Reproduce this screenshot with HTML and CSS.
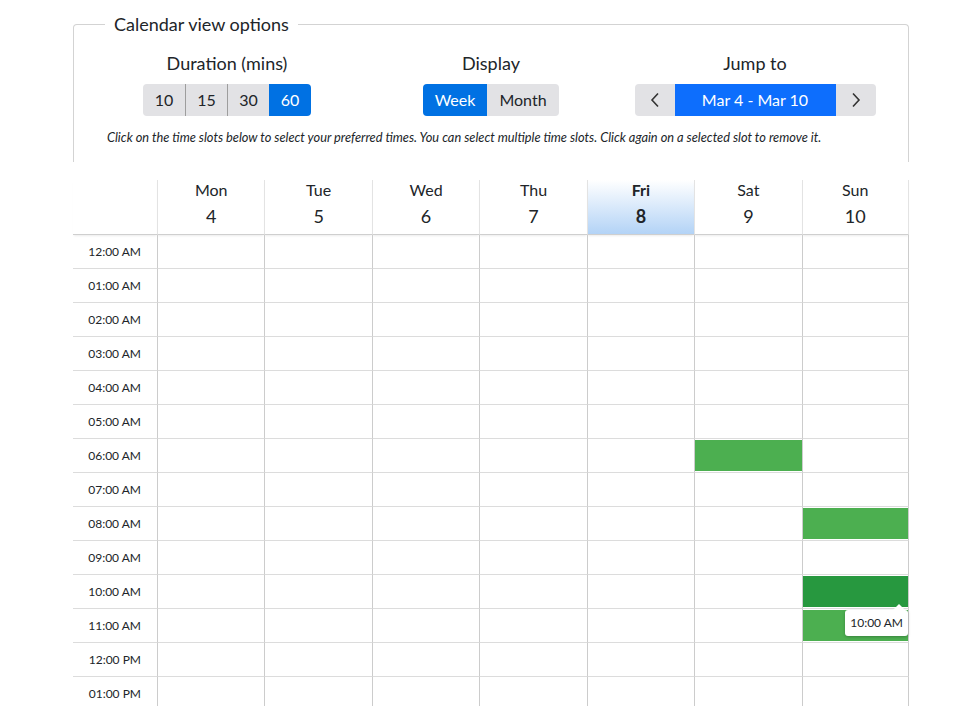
FILE: index.html
```html
<!DOCTYPE html>
<html lang="en">
<head>
<meta charset="utf-8">
<title>Calendar</title>
<link rel="stylesheet" href="styles.css">
</head>
<body>
<div class="wrap">
  <fieldset class="options">
    <legend>Calendar view options</legend>
    <div class="controls">
      <div class="control">
        <div class="control-title">Duration (mins)</div>
        <div class="btn-group">
          <button class="btn w42">10</button>
          <button class="btn w42">15</button>
          <button class="btn w42">30</button>
          <button class="btn w42 active">60</button>
        </div>
      </div>
      <div class="control">
        <div class="control-title">Display</div>
        <div class="btn-group">
          <button class="btn active w64">Week</button>
          <button class="btn w72">Month</button>
        </div>
      </div>
      <div class="control">
        <div class="control-title">Jump to</div>
        <div class="btn-group">
          <button class="btn w40 arrow"><svg width="10" height="16" viewBox="0 0 10 16"><path d="M8 1.5 L2 8 L8 14.5" fill="none" stroke="#333" stroke-width="1.6"/></svg></button>
          <button class="btn range">Mar 4 - Mar 10</button>
          <button class="btn w40 arrow"><svg width="10" height="16" viewBox="0 0 10 16"><path d="M2 1.5 L8 8 L2 14.5" fill="none" stroke="#333" stroke-width="1.6"/></svg></button>
        </div>
      </div>
    </div>
    <p class="hint">Click on the time slots below to select your preferred times. You can select multiple time slots. Click again on a selected slot to remove it.</p>
  </fieldset>

  <div class="calendar">
    <div class="head corner"></div>
    <div class="head day"><span class="dname">Mon</span><span class="dnum">4</span></div>
    <div class="head day"><span class="dname">Tue</span><span class="dnum">5</span></div>
    <div class="head day"><span class="dname">Wed</span><span class="dnum">6</span></div>
    <div class="head day"><span class="dname">Thu</span><span class="dnum">7</span></div>
    <div class="head day today"><span class="dname">Fri</span><span class="dnum">8</span></div>
    <div class="head day"><span class="dname">Sat</span><span class="dnum">9</span></div>
    <div class="head day last"><span class="dname">Sun</span><span class="dnum">10</span></div>
  </div>
  <div class="calendar body" id="grid"></div>
</div>
<script src="app.js"></script>
</body>
</html>
```
FILE: app.js
```js
(function () {
  var grid = document.getElementById('grid');
  var labels = [];
  for (var h = 0; h < 14; h++) {
    var hr = h % 12 === 0 ? 12 : h % 12;
    labels.push((hr < 10 ? '0' + hr : '' + hr) + ':00 ' + (h < 12 ? 'AM' : 'PM'));
  }
  var sel = { '6-5': 'sel', '8-6': 'sel', '10-6': 'sel dark', '11-6': 'sel' };
  var html = '';
  for (var i = 0; i < labels.length; i++) {
    html += '<div class="time">' + labels[i] + '</div>';
    for (var d = 0; d < 7; d++) {
      var key = i + '-' + d;
      var cls = 'cell' + (d === 6 ? ' last' : '');
      var inner = '';
      if (sel[key]) {
        inner = '<div class="slot ' + sel[key] + '"></div>';
        if (key === '10-6') {
          inner += '<div class="tip">10:00 AM</div>';
        }
      }
      html += '<div class="' + cls + '">' + inner + '</div>';
    }
  }
  grid.innerHTML = html;
})();
```
FILE: styles.css
```css
* { box-sizing: border-box; }
html, body { margin: 0; padding: 0; background: #fff; }
body {
  font-family: "Lato", "Noto Sans", sans-serif;
  color: #212529;
}
.wrap {
  margin-left: 73px;
  width: 836px;
  padding-top: 12px;
}
.options {
  margin: 0;
  border: 1px solid #d3d3d3;
  border-bottom: none;
  border-radius: 4px 4px 0 0;
  padding: 0 21px 17px;
  min-width: 0;
}
.options legend {
  margin-left: 10px;
  padding: 0 9px;
  font-size: 18px;
  line-height: 24px;
}
.controls {
  display: grid;
  grid-template-columns: repeat(3, 1fr);
  margin-top: 15px;
}
.control {
  display: flex;
  flex-direction: column;
  align-items: center;
  gap: 9px;
}
.control-title {
  font-size: 18px;
  line-height: 24px;
}
.btn-group {
  display: flex;
  border-radius: 4px;
  overflow: hidden;
}
.btn {
  height: 32px;
  border: none;
  margin: 0;
  padding: 0 0 1px;
  font-family: inherit;
  font-size: 16px;
  color: #212529;
  background: #e2e2e5;
  display: flex;
  align-items: center;
  justify-content: center;
}
.btn + .btn { border-left: 1px solid #9d9d9d; }
.btn.active { background: #0071e3; color: #fff; border-left: none; }
.btn.active + .btn { border-left: none; }
.w42 { width: 42px; }
.w40 { width: 40px; }
.w64 { width: 64px; }
.w72 { width: 72px; }
.btn.range { width: 161px; background: #0d6efd; color: #fff; border-left: none; }
.btn.range + .btn { border-left: none; }
.hint {
  margin: 13px 0 0 12px;
  font-size: 12.8px;
  line-height: 16px;
  font-style: italic;
}
.calendar {
  display: grid;
  grid-template-columns: 84px repeat(7, 1fr);
}
.calendar:not(.body) { margin-top: 18px; }
.head {
  height: 55px;
  border-bottom: 1px solid #cfcfcf;
  box-shadow: 0 2px 2px -1px rgba(0,0,0,0.08);
}
.day {
  border-left: 1px solid #e3e3e3;
  display: flex;
  flex-direction: column;
  align-items: center;
}
.day.last { border-right: 1px solid #e3e3e3; }
.dname { font-size: 16px; line-height: 20px; }
.dnum { font-size: 18px; line-height: 24px; margin-top: 4px; }
.today {
  background: linear-gradient(to bottom, #ffffff 0%, #b3d3f6 100%);
  font-weight: bold;
}
.time {
  height: 34px;
  border-bottom: 1px solid #dcdcdc;
  font-size: 12px;
  line-height: 33px;
  text-align: right;
  padding-right: 16px;
  color: #212529;
}
.cell {
  height: 34px;
  border-bottom: 1px solid #dcdcdc;
  border-left: 1px solid #cccccc;
  position: relative;
  padding: 1px 0 0 0;
}
.cell.last { border-right: 1px solid #cccccc; }
.slot {
  height: 31px;
  background: #4caf50;
}
.slot.dark { background: #27983f; }
.tip {
  position: absolute;
  top: 35px;
  right: 0;
  z-index: 2;
  background: #fff;
  color: #212529;
  font-size: 12px;
  line-height: 16px;
  padding: 5px 5px;
  border-radius: 3px;
  box-shadow: 0 1px 3px rgba(0,0,0,0.25);
  white-space: nowrap;
}
.tip::before {
  content: "";
  position: absolute;
  top: -6px;
  right: 3px;
  border-left: 6px solid transparent;
  border-right: 6px solid transparent;
  border-bottom: 6px solid #fff;
}
```
